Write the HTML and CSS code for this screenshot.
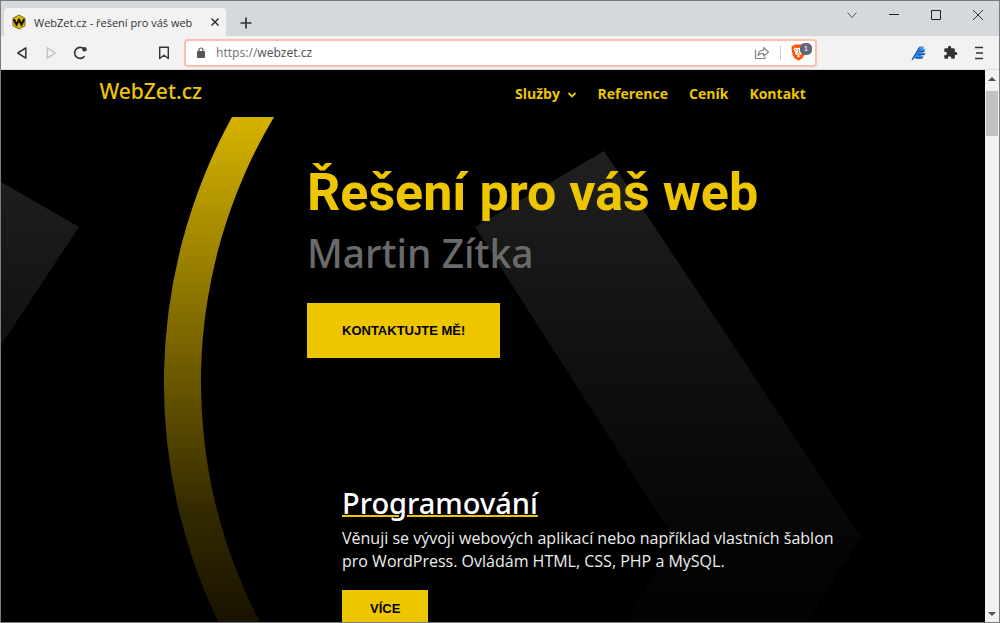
FILE: index.html
```html
<!DOCTYPE html>
<html lang="cs">
<head>
    <meta charset="UTF-8">
    <meta name="viewport" content="width=device-width, initial-scale=1.0">
    <title>WebZet.cz - řešení pro váš web</title>
    <link rel="stylesheet" href="styles.css">
</head>
<body>
    <div class="window">
        <!-- Title bar -->
        <div class="titlebar">
            <div class="tab">
                <svg class="favicon" width="14" height="16" viewBox="0 0 14 16">
                    <path d="M7 1 13 4.200v7.600L7 15 1 11.800V4.200z" fill="#d9b90a" stroke="#7d6c10"/>
                    <path d="M1.800 5.300 4.500 10.500 7 6l2.500 4.500 2.700-5.200" fill="none" stroke="#111" stroke-width="2.200"/>
                </svg>
                <span class="tab-title">WebZet.cz - řešení pro váš web</span>
                <button class="icon-btn tab-close" aria-label="Zavřít kartu">
                    <svg width="10" height="10" viewBox="0 0 10 10"><path d="M1.500 1.500l7 7M8.500 1.500l-7 7" stroke="#333" stroke-width="1.500"/></svg>
                </button>
            </div>
            <button class="icon-btn new-tab" aria-label="Nová karta">
                <svg width="12" height="12" viewBox="0 0 12 12"><path d="M6 .5v11M.5 6h11" stroke="#333" stroke-width="1.700"/></svg>
            </button>
            <div class="window-buttons">
                <button class="icon-btn" aria-label="Seznam karet">
                    <svg width="12" height="12" viewBox="0 0 12 12"><path d="M1.500 3.500 6 8.500l4.500-5" fill="none" stroke="#555"/></svg>
                </button>
                <button class="icon-btn" aria-label="Minimalizovat">
                    <svg width="12" height="12" viewBox="0 0 12 12"><path d="M1 5.500h10" stroke="#222"/></svg>
                </button>
                <button class="icon-btn" aria-label="Maximalizovat">
                    <svg width="12" height="12" viewBox="0 0 12 12"><path d="M1.500 1.500h9v9h-9z" fill="none" stroke="#222"/></svg>
                </button>
                <button class="icon-btn" aria-label="Zavřít">
                    <svg width="12" height="12" viewBox="0 0 12 12"><path d="M1 1l10 10M11 1l-10 10" stroke="#333"/></svg>
                </button>
            </div>
        </div>

        <!-- Toolbar -->
        <div class="toolbar">
            <div class="nav-buttons">
                <button class="icon-btn" aria-label="Zpět">
                    <svg width="14" height="14" viewBox="0 0 14 14"><path d="M10.800 1.800v10.400L2.800 7z" fill="none" stroke="#333" stroke-width="1.500" stroke-linejoin="round"/></svg>
                </button>
                <button class="icon-btn" aria-label="Vpřed">
                    <svg width="14" height="14" viewBox="0 0 14 14"><path d="M3.200 1.800v10.400l8-5.200z" fill="none" stroke="#bbb" stroke-width="1.200" stroke-linejoin="round"/></svg>
                </button>
                <button class="icon-btn" aria-label="Obnovit">
                    <svg width="14" height="14" viewBox="0 0 14 14"><path d="M11.500 10.200A5.500 5.500 0 1 1 11 3" fill="none" stroke="#333" stroke-width="1.600"/><circle cx="11.500" cy="3.300" r="2.200" fill="#333"/></svg>
                </button>
            </div>
            <button class="icon-btn" aria-label="Přidat záložku">
                <svg width="14" height="14" viewBox="0 0 14 14"><path d="M2.700 1.300h8.600v11.200L7 9.200l-4.300 3.300z" fill="none" stroke="#333" stroke-width="1.400" stroke-linejoin="round"/></svg>
            </button>
            <div class="address-bar">
                <svg width="8" height="11" viewBox="0 0 8 11"><path d="M2 5V3a2 2 0 0 1 4 0v2" fill="none" stroke="#555" stroke-width="1.200"/><rect y="4" width="8" height="7" rx="1" fill="#555"/></svg>
                <div class="url">
                    <label for="url">https://</label>
                    <input id="url" type="text" value="webzet.cz">
                </div>
                <button class="icon-btn" aria-label="Sdílet">
                    <svg width="16" height="14" viewBox="0 0 16 14"><path d="M1.500 3.500v9h9.500v-2" fill="none" stroke="#888" stroke-width="1.200"/><path d="M4 9.500C4.300 6 6.500 4.300 9.500 4.200V1.500L14.500 6 9.500 10V7.300C7 7.200 5.500 7.800 4 9.500z" fill="none" stroke="#888" stroke-width="1.200" stroke-linejoin="round"/></svg>
                </button>
                <span class="divider"></span>
                <button class="icon-btn shield" aria-label="Brave Shields">
                    <svg width="15" height="17" viewBox="0 0 15 17"><path d="M4 .5h7l1.500 1.300 1.800.2.200 3-1.200 6.500L11 14.500 7.500 16.700 4 14.500 1.700 11.500.5 5l.2-3 1.800-.2z" fill="#ff5500"/><path d="M3.500 3.500 6 4l1.500-.3L9 4l2.500-.5 1 2-1.800 2.700.3 1.800-2 1-1.500-.7-1.500.7-2-1 .3-1.800L2.500 5.500zM5.700 12l1.800-1 1.800 1-1.800 1.500z" fill="#fff"/><path d="M4 5.500l2 .7M11 5.500l-2 .7M7.500 5v3.500M6 9.500l1.500-1L9 9.500" fill="none" stroke="#ff5500" stroke-width=".8"/></svg>
                    <span class="badge">1</span>
                </button>
            </div>
            <div class="extensions">
                <button class="icon-btn" aria-label="Rozšíření Editor">
                    <svg width="16" height="16" viewBox="0 0 16 16"><path d="M1 15 8.500 1.500h4.500l-1 2.300h2.500l-1.200 2.500H12l-.4 1.400h3l-1 2H10.500l-.5 1.300h2.500l-1 2H4z" fill="#3b93e8"/><path d="M1 15 8.500 2.500M7.500 6.300h6M6.500 9.500h7M4.500 13h7" fill="none" stroke="#1450a8" stroke-width="1.300"/></svg>
                </button>
                <button class="icon-btn" aria-label="Rozšíření">
                    <svg width="15" height="15" viewBox="0 0 24 24"><path d="M20.500 11H19V7a2 2 0 0 0-2-2h-4V3.500a2.500 2.500 0 0 0-5 0V5H4a2 2 0 0 0-2 2v3.800h1.500a2.700 2.700 0 0 1 0 5.400H2V20a2 2 0 0 0 2 2h3.800v-1.500a2.700 2.700 0 0 1 5.400 0V22H17a2 2 0 0 0 2-2v-4h1.500a2.500 2.500 0 0 0 0-5z" fill="#333"/></svg>
                </button>
                <button class="icon-btn" aria-label="Nabídka">
                    <svg width="10" height="14" viewBox="0 0 10 14"><path d="M1 1.500h8M2 7h7M1 12.500h8" stroke="#333" stroke-width="1.300"/></svg>
                </button>
            </div>
        </div>

        <!-- Page -->
        <div class="viewport">
            <div class="page">
                <!-- Background shapes -->
                <svg class="page-art" viewBox="1 70 984 552" preserveAspectRatio="xMinYMin slice">
                    <defs>
                        <linearGradient id="gold" gradientUnits="userSpaceOnUse" x1="0" y1="117" x2="0" y2="622">
                            <stop offset="0" stop-color="#d6b300"/>
                            <stop offset=".5" stop-color="#6e5b00"/>
                            <stop offset=".78" stop-color="#342a00"/>
                            <stop offset="1" stop-color="#181200"/>
                        </linearGradient>
                        <linearGradient id="gray" gradientUnits="userSpaceOnUse" x1="0" y1="150" x2="0" y2="622">
                            <stop offset="0" stop-color="#202020"/>
                            <stop offset=".45" stop-color="#101010"/>
                            <stop offset=".8" stop-color="#060606"/>
                            <stop offset="1" stop-color="#020202"/>
                        </linearGradient>
                    </defs>
                    <path d="M1 182 79 227 1 345z" fill="url(#gray)"/>
                    <path d="M604 151 475 227 675 540 622 626H804L861 537z" fill="url(#gray)"/>
                    <path d="M232 117A554 554 0 0 0 221 628H263A518 518 0 0 1 274 117z" fill="url(#gold)"/>
                </svg>

                <header class="site-header">
                    <a class="logo" href="#">WebZet.cz</a>
                    <nav class="menu">
                        <a href="#">Služby
                            <svg width="10" height="8" viewBox="0 0 10 8"><path d="M1.500 2 5 5.500 8.500 2" fill="none" stroke="currentColor" stroke-width="1.800"/></svg>
                        </a>
                        <a href="#">Reference</a>
                        <a href="#">Ceník</a>
                        <a href="#">Kontakt</a>
                    </nav>
                </header>

                <main>
                    <section class="hero">
                        <h1>Řešení pro váš web</h1>
                        <h2>Martin Zítka</h2>
                        <a class="btn btn-large" href="#">KONTAKTUJTE MĚ!</a>
                    </section>
                    <section class="service">
                        <h3><a href="#">Programování</a></h3>
                        <p>Věnuji se vývoji webových aplikací nebo například vlastních šablon pro WordPress. Ovládám HTML, CSS, PHP a MySQL.</p>
                        <a class="btn" href="#">VÍCE</a>
                    </section>
                </main>
            </div>
            <div class="scrollbar">
                <svg width="8" height="5" viewBox="0 0 8 5"><path d="M0 5 4 1l4 4z" fill="#505050"/></svg>
                <div class="thumb"></div>
                <svg width="8" height="5" viewBox="0 0 8 5"><path d="M0 0l4 4 4-4z" fill="#505050"/></svg>
            </div>
        </div>
    </div>
</body>
</html>
```
FILE: styles.css
```css
* {
    box-sizing: border-box;
}

body {
    margin: 0;
    font-family: "Open Sans", "Noto Sans", sans-serif;
    background-color: #000;
}

a {
    color: inherit;
    text-decoration: none;
}

.window {
    height: 100vh;
    display: flex;
    flex-direction: column;
    border: 1px solid #7a7c7e;
    overflow: hidden;
}

.icon-btn {
    display: flex;
    align-items: center;
    justify-content: center;
    padding: 0;
    border: none;
    background: none;
    cursor: pointer;
}

/* Title bar */
.titlebar {
    display: flex;
    align-items: center;
    height: 35px;
    flex-shrink: 0;
    padding-left: 3px;
    background-color: #d5d9dc;
}

.tab {
    display: flex;
    align-items: center;
    align-self: flex-end;
    width: 222px;
    height: 28px;
    padding: 0 6px 0 8px;
    background-color: #f2f2f2;
    border-radius: 4px 4px 0 0;
}

.tab-title {
    flex: 1;
    margin-left: 8px;
    font-size: 11px;
    color: #333;
    white-space: nowrap;
}

.new-tab {
    margin: 8px 0 0 14px;
}

.window-buttons {
    display: flex;
    gap: 30px;
    margin: 0 15px 8px auto;
}

/* Toolbar */
.toolbar {
    display: flex;
    align-items: center;
    height: 34px;
    flex-shrink: 0;
    padding: 0 15px 0 14px;
    background-color: #f2f2f2;
    border-bottom: 1px solid #ddd;
}

.nav-buttons {
    display: flex;
    gap: 15px;
    margin-right: 70px;
}

.address-bar {
    display: flex;
    align-items: center;
    flex: 0 1 633px;
    height: 28px;
    margin-left: 13px;
    padding: 0 3px 0 11px;
    background-color: #fff;
    border: 2px solid #fcbfae;
    border-radius: 4px;
}

.url {
    display: flex;
    flex: 1;
    margin-left: 11px;
    font-family: "Noto Sans", sans-serif;
    font-size: 12px;
    color: #777;
}

.url input {
    flex: 1;
    min-width: 0;
    padding: 0;
    border: none;
    outline: none;
    font: inherit;
    color: #555;
}

.divider {
    width: 1px;
    height: 14px;
    margin: 0 10px;
    background-color: #ccc;
}

.shield {
    position: relative;
    margin-right: 6px;
}

.badge {
    position: absolute;
    top: -1px;
    left: 9px;
    width: 12px;
    height: 12px;
    font-size: 8px;
    line-height: 12px;
    text-align: center;
    color: #fff;
    background-color: #63657a;
    border-radius: 5px;
}

.extensions {
    display: flex;
    align-items: center;
    gap: 16px;
    margin-left: auto;
}

/* Page area */
.viewport {
    display: flex;
    flex: 1;
    min-height: 0;
}

.page {
    position: relative;
    flex: 1;
    overflow: hidden;
    background-color: #000;
}

/* Lies behind the content */
.page-art {
    position: absolute;
    top: 0;
    left: 0;
    width: 100%;
    height: 100%;
}

.site-header {
    position: relative;
    display: flex;
    align-items: center;
    justify-content: space-between;
    width: 72%;
    height: 46px;
    margin-left: 10%;
    padding-right: 2px;
    color: #edc600;
}

.logo {
    padding-bottom: 4px;
    font-family: "Noto Sans", sans-serif;
    font-size: 21px;
    line-height: 40px;
    font-weight: 500;
}

.menu {
    display: flex;
    gap: 21px;
    font-size: 14px;
    font-weight: 700;
}

.menu svg {
    margin-left: 3px;
    vertical-align: middle;
}

main {
    position: relative;
    padding: 47px 0 0 306px;
}

h1, h2, h3, p {
    margin: 0;
}

h1 {
    font-family: Roboto, sans-serif;
    font-size: 52px;
    line-height: 60px;
    font-weight: 700;
    color: #edc600;
}

h2 {
    font-family: "Noto Sans", sans-serif;
    font-size: 39px;
    line-height: 60px;
    font-weight: 500;
    color: #6a6a6a;
}

.btn {
    display: inline-block;
    padding: 0 28px;
    font-family: "Liberation Sans", Arial, sans-serif;
    font-size: 13px;
    line-height: 38px;
    font-weight: 700;
    color: #000;
    background-color: #edc600;
}

.btn-large {
    margin-top: 20px;
    padding: 0 35px;
    line-height: 55px;
}

.service {
    width: 500px;
    margin: 125px 0 0 35px;
    color: #fff;
}

h3 {
    margin-bottom: 4px;
    font-family: "Noto Sans", sans-serif;
    font-size: 29px;
    line-height: 40px;
    font-weight: 500;
}

h3 a {
    text-decoration: underline;
    text-decoration-color: #edc600;
    text-decoration-thickness: 2px;
}

.service p {
    margin-bottom: 17px;
    font-size: 16px;
    line-height: 23px;
    color: #eee;
}

/* Scrollbar */
.scrollbar {
    display: flex;
    flex-direction: column;
    align-items: center;
    width: 14px;
    padding: 6px 0 5px;
    background-color: #f1f1f1;
}

.thumb {
    width: 12px;
    height: 45px;
    margin: 10px 0 auto;
    background-color: #c1c1c1;
}
```
